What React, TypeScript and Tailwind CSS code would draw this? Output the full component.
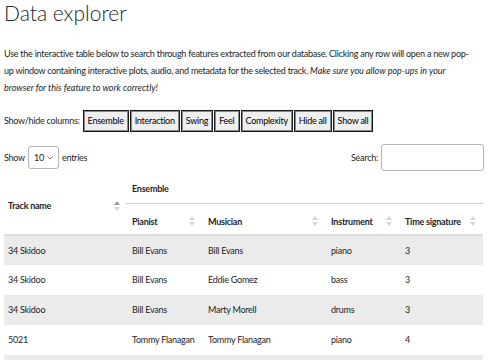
const rows = [
  ["34 Skidoo", "Bill Evans", "Bill Evans", "piano", "3"],
  ["34 Skidoo", "Bill Evans", "Eddie Gomez", "bass", "3"],
  ["34 Skidoo", "Bill Evans", "Marty Morell", "drums", "3"],
  ["5021", "Tommy Flanagan", "Tommy Flanagan", "piano", "4"],
  ["5021", "Tommy Flanagan", "George Mraz", "bass", "4"],
];

const toggles = ["Ensemble", "Interaction", "Swing", "Feel", "Complexity", "Hide all", "Show all"];

function SortIcon({ active = false }: { active?: boolean }) {
  return (
    <svg width="6" height="10" viewBox="0 0 6 10" className="shrink-0">
      <polygon points="0,4 3,0 6,4" fill={active ? "#9a9a9a" : "#d6d6d6"} />
      <polygon points="0,6 3,10 6,6" fill="#d6d6d6" />
    </svg>
  );
}

function HeadCell({ label }: { label: string }) {
  return (
    <th className="h-[32px] border-b-2 border-[#dedede] pl-[6px] pr-[7px] pt-[5px] text-left font-bold">
      <div className="flex items-center justify-between">
        <span>{label}</span>
        <SortIcon />
      </div>
    </th>
  );
}

export default function App() {
  return (
    <div className="h-[360px] w-[488px] overflow-hidden bg-white px-1 font-[Lato,sans-serif] text-[9px] tracking-[-0.25px] text-[#212529]">
      <h1 className="text-[21px] font-light leading-[26px] tracking-normal">Data explorer</h1>

      <p className="mt-[19px] w-[471px] leading-[17px]">
        Use the interactive table below to search through features extracted from our database. Clicking any row
        will open a new pop-up window containing interactive plots, audio, and metadata for the selected track.{" "}
        <em className="tracking-normal">Make sure you allow pop-ups in your browser for this feature to work correctly!</em>
      </p>

      <div className="mt-[14px] flex h-[22px] items-center">
        <span className="mr-[3px]">Show/hide columns:</span>
        <div className="flex gap-[1px]">
          {toggles.map((t) => (
            <button
              key={t}
              className="h-[22px] border border-[#1a1a1a] bg-[#efefef] px-[4px] text-black shadow-[inset_0_0_0_1px_#8a8a8a]"
            >
              {t}
            </button>
          ))}
        </div>
      </div>

      <div className="mt-[12px] flex h-[27px] items-center justify-between">
        <div className="flex items-center">
          <span>Show</span>
          <div className="mx-[3px] flex h-[23px] w-[31px] items-center justify-between rounded-[3px] border border-[#b5b5b5] pl-[5px] pr-[5px]">
            <span>10</span>
            <svg width="6" height="4" viewBox="0 0 6 4">
              <polyline points="0.5,0.5 3,3 5.5,0.5" fill="none" stroke="#555" strokeWidth="0.8" />
            </svg>
          </div>
          <span>entries</span>
        </div>
        <div className="flex items-center">
          <span>Search:</span>
          <div className="ml-[3px] h-[27px] w-[103px] rounded-[3px] border border-[#b5b5b5]" />
        </div>
      </div>

      <table className="mt-[2px] w-[479px] table-fixed border-collapse">
        <colgroup>
          <col className="w-[122px]" />
          <col className="w-[76px]" />
          <col className="w-[123px]" />
          <col className="w-[74px]" />
          <col className="w-[84px]" />
        </colgroup>
        <thead>
          <tr>
            <th rowSpan={2} className="border-b-2 border-[#dedede] pl-[4px] pr-[6px] pt-[4px] text-left font-bold">
              <div className="flex items-center justify-between">
                <span>Track name</span>
                <SortIcon active />
              </div>
            </th>
            <th colSpan={4} className="h-[30px] border-b border-[#cfcfcf] pl-[6px] pt-[2px] text-left font-bold">
              Ensemble
            </th>
          </tr>
          <tr>
            <HeadCell label="Pianist" />
            <HeadCell label="Musician" />
            <HeadCell label="Instrument" />
            <HeadCell label="Time signature" />
          </tr>
        </thead>
        <tbody>
          {rows.map((r, i) => (
            <tr key={i} className={i % 2 === 0 ? "h-[30px] bg-[#ebebeb]" : "h-[30px] bg-white"}>
              {r.map((c, j) => (
                <td key={j} className={j === 0 ? "pl-[4px]" : "pl-[6px]"}>
                  {c}
                </td>
              ))}
            </tr>
          ))}
        </tbody>
      </table>
    </div>
  );
}
